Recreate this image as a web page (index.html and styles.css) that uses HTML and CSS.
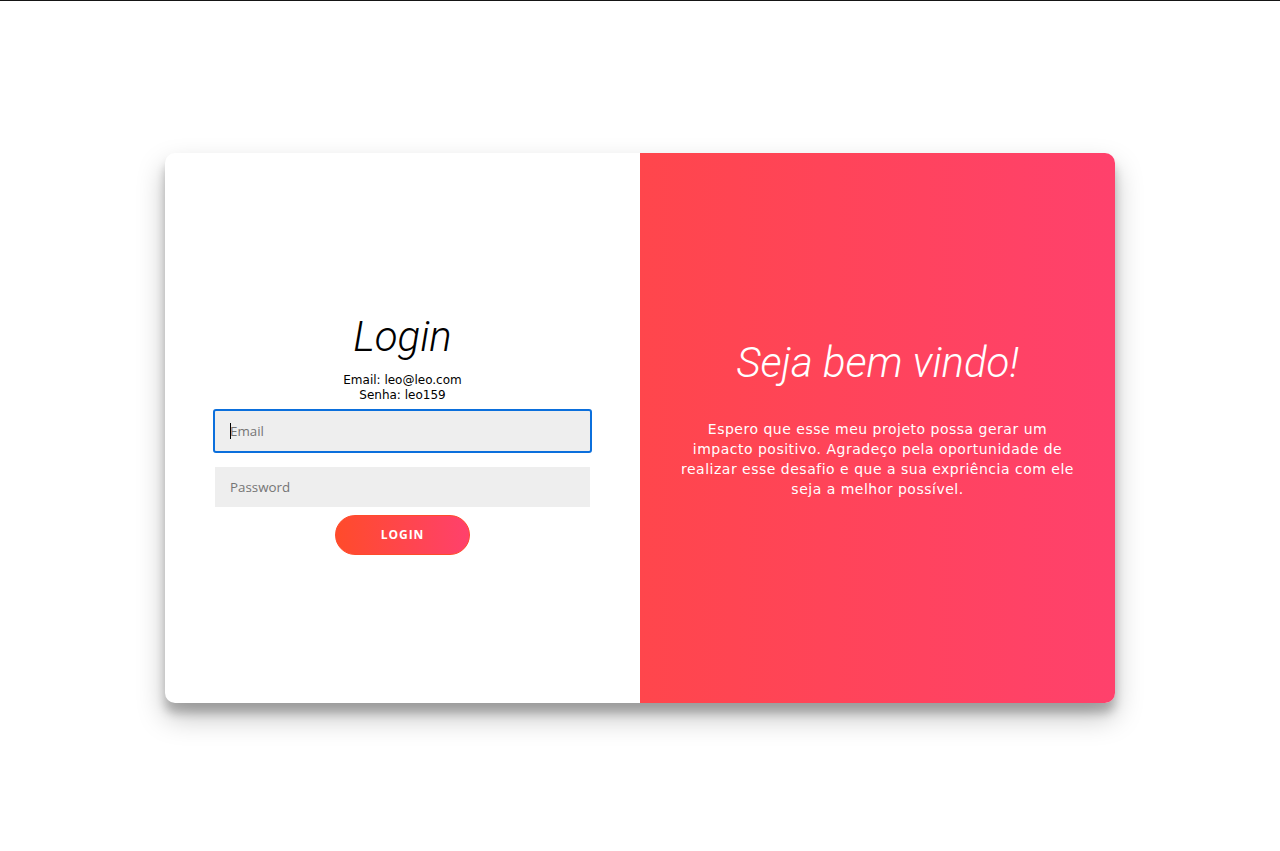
FILE: index.html
```html
<!DOCTYPE html>
<html lang="pt-BR">
<head>
<meta charset="utf-8">
<title>Login</title>
<link rel="stylesheet" href="styles.css">
</head>
<body>
<div class="topline"></div>
<main class="page">
  <div class="card">
    <section class="form-panel">
      <form class="login-form">
        <h1 class="title">Login</h1>
        <span class="hint">Email: leo@leo.com<br>Senha: leo159</span>
        <div class="field">
          <input class="input input-focus" type="email" placeholder="Email">
          <span class="caret"></span>
        </div>
        <div class="field">
          <input class="input" type="password" placeholder="Password">
        </div>
        <button class="btn" type="button">Login</button>
      </form>
    </section>
    <section class="overlay-panel">
      <h1 class="title title-light">Seja bem vindo!</h1>
      <p class="welcome">Espero que esse meu projeto possa gerar um impacto positivo. Agradeço pela oportunidade de realizar esse desafio e que a sua expriência com ele seja a melhor possível.</p>
    </section>
  </div>
</main>
</body>
</html>
```

FILE: styles.css
```css
* { box-sizing: border-box; }

html, body {
  margin: 0;
  padding: 0;
  background: #fff;
  font-family: "DejaVu Sans", sans-serif;
}

.topline {
  height: 1px;
  background: #151515;
}

.page {
  height: 850px;
  padding-top: 152px;
}

.card {
  width: 950px;
  height: 550px;
  margin: 0 auto;
  display: flex;
  border-radius: 10px;
  overflow: hidden;
  background: #fff;
  box-shadow: 0 14px 28px rgba(0, 0, 0, 0.25), 0 10px 10px rgba(0, 0, 0, 0.22);
}

.form-panel {
  width: 50%;
  height: 100%;
}

.login-form {
  height: 100%;
  padding: 0 50px;
  display: flex;
  flex-direction: column;
  align-items: center;
  justify-content: center;
  text-align: center;
}

.title {
  margin: 0;
  font-family: "Roboto", sans-serif;
  font-weight: 300;
  font-style: italic;
  font-size: 42px;
  line-height: 72px;
  color: #000;
}

.title-light {
  color: #fff;
}

.hint {
  font-size: 12px;
  line-height: 15px;
  color: #000;
}

.field {
  position: relative;
  width: 100%;
  margin: 8px 0;
}

.input {
  display: block;
  width: 100%;
  height: 40px;
  margin: 0;
  padding: 12px 15px;
  border: none;
  background: #eee;
  font-family: "Open Sans", sans-serif;
  font-size: 13.33px;
  color: #333;
}

.input::placeholder {
  color: #757575;
}

.input-focus {
  outline: 2px solid #0b6fdc;
  outline-offset: 0;
  border-radius: 1px;
}

.caret {
  position: absolute;
  left: 15px;
  top: 12px;
  width: 1px;
  height: 16px;
  background: #000;
}

.btn {
  border-radius: 20px;
  border: 1px solid #ff4b2b;
  background: linear-gradient(to right, #ff4b2b, #ff416c);
  color: #fff;
  font-family: "Open Sans", sans-serif;
  font-size: 12px;
  font-weight: 700;
  line-height: 14px;
  padding: 12px 45px;
  letter-spacing: 1px;
  text-transform: uppercase;
  cursor: pointer;
}

.overlay-panel {
  width: 50%;
  height: 100%;
  padding: 0 40px;
  display: flex;
  flex-direction: column;
  align-items: center;
  justify-content: center;
  text-align: center;
  color: #fff;
  background: linear-gradient(to right, #ff464c, #ff416c);
}

.welcome {
  margin: 20px 0 30px;
  font-size: 14px;
  line-height: 20px;
  letter-spacing: 0.5px;
  color: #fff;
}
```
